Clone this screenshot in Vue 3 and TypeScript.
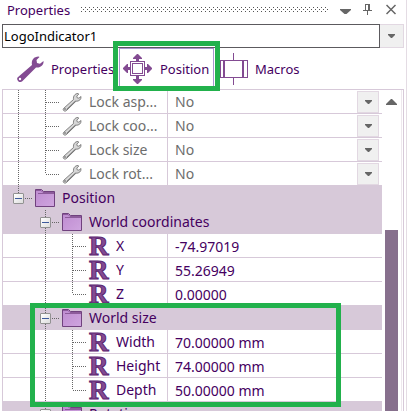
<script setup lang="ts">
import { ref } from 'vue'

type Guide = 'blank' | 'line' | 'tee' | 'elbow' | 'root' | 'node'
type Icon = 'wrench' | 'folder' | 'real'

interface Row {
  name: string
  guides: Guide[]
  icon: Icon
  kind: 'choice' | 'group' | 'text'
  value?: string
}

const choice = (name: string, last = false): Row => ({
  name, guides: ['line', last ? 'elbow' : 'tee'], icon: 'wrench', kind: 'choice', value: 'No',
})
const group = (name: string): Row => ({ name, guides: ['blank', 'node'], icon: 'folder', kind: 'group' })
const real = (name: string, value: string, last = false): Row => ({
  name, guides: ['blank', 'line', last ? 'elbow' : 'tee'], icon: 'real', kind: 'text', value,
})

const rows = ref<Row[]>([
  choice('Lock asp...'),
  choice('Lock coo...'),
  choice('Lock size'),
  choice('Lock rot...', true),
  { name: 'Position', guides: ['root'], icon: 'folder', kind: 'group' },
  group('World coordinates'),
  real('X', '-74.97019'),
  real('Y', '55.26949'),
  real('Z', '0.00000', true),
  group('World size'),
  real('Width', '70.00000 mm'),
  real('Height', '74.00000 mm'),
  real('Depth', '50.00000 mm', true),
  group('Rotation'),
])

const selected = ref('LogoIndicator1')

const isNode = (g: Guide) => g === 'root' || g === 'node'
const above = (g: Guide) => g !== 'blank'
const below = (g: Guide) => g === 'line' || g === 'tee' || g === 'node'
const branch = (g: Guide) => g === 'tee' || g === 'elbow' || isNode(g)
</script>

<template>
  <main class="panel">
    <header class="caption">
      <h1>Properties</h1>
      <svg class="grip" height="5" shape-rendering="crispEdges">
        <defs>
          <pattern id="grip-dots" width="4" height="4" patternUnits="userSpaceOnUse">
            <path d="M0 0h1v1H0zM2 2h1v1H2z" fill="#555" />
          </pattern>
        </defs>
        <rect width="100%" height="5" fill="url(#grip-dots)" />
      </svg>
      <button type="button" aria-label="Menu">
        <svg width="12" height="12" viewBox="0 0 12 12"><path d="M0 5h11v1l-4.500 4h-2L0 6z" fill="#666" /></svg>
      </button>
      <button type="button" aria-label="Pin">
        <svg width="12" height="12" viewBox="0 0 12 12" shape-rendering="crispEdges" fill="#666">
          <path d="M2 0h5v6h2v1H5v4H4V7H0V6h2zM3 1v5h2V1z" fill-rule="evenodd" />
        </svg>
      </button>
      <button type="button" aria-label="Close">
        <svg width="12" height="12" viewBox="0 0 12 12"><path d="M.5 1l9 9M9.500 1l-9 9" stroke="#666" stroke-width="1.500" /></svg>
      </button>
    </header>

    <div class="combo">
      <select v-model="selected" aria-label="Object">
        <option>LogoIndicator1</option>
      </select>
      <span class="drop"><svg width="7" height="4"><path d="M0 0h7v1L4 4H3L0 1z" fill="#666" /></svg></span>
    </div>

    <nav class="tabs">
      <button type="button" class="tab tab-first">
        <svg width="28" height="28" viewBox="0 0 28 28">
          <path d="M1.500 22.500L16 10C15 5 18 1.500 22.500 1.500l1 .5-3 3 .5 3 3 .8 3.500-2.800C28 9.500 25 13 20 12.500L6.500 26c-1 1-3 1.500-4 .5-1.200-1-1.800-3-1-4z" fill="#834b92" />
          <circle cx="4" cy="24" r="1.200" fill="#fff" />
        </svg>
        <span>Properties</span>
      </button>
      <button type="button" class="tab tab-active">
        <svg width="30" height="30" viewBox="0 0 30 30" fill="#834b92">
          <path d="M14 0h1l4 4v1h-3v3h-3V5h-3V4zM14 30h1l4-4v-1h-3v-3h-3v3h-3v1zM0 14v1l4 4h1v-3h3v-3H5v-3H4zM29 14v1l-4 4h-1v-3h-3v-3h3v-3h1z" />
          <path d="M7 7h15v15H7zM8 8v13h13V8zM9 9h11v11H9zM10 10v9h9v-9z" fill-rule="evenodd" shape-rendering="crispEdges" />
        </svg>
        <span>Position</span>
      </button>
      <button type="button" class="tab tab-last">
        <svg width="28" height="32" viewBox="0 0 28 32" fill="none" stroke="#834b92" shape-rendering="crispEdges">
          <path d="M.5 7.500h27v17H.5zM13.500 0v7M13.500 25v7" />
          <path d="M4 7v18M23 7v18" stroke-width="2" />
        </svg>
        <span>Macros</span>
      </button>
    </nav>

    <section class="grid">
      <table>
        <colgroup><col class="col-name" /><col /></colgroup>
        <tbody>
          <tr v-for="row in rows" :key="row.name" :class="row.kind">
            <th scope="row" :colspan="row.kind === 'group' ? 2 : 1">
              <div class="name">
                <span v-for="(g, i) in row.guides" :key="i" class="guide">
                  <svg width="27" height="24" shape-rendering="crispEdges">
                    <g stroke="#666" stroke-dasharray="1 1">
                      <path v-if="above(g)" d="M13.500 0v12" />
                      <path v-if="below(g)" d="M13.500 12v12" />
                      <path v-if="branch(g)" d="M14 12.500h14" />
                    </g>
                  </svg>
                  <button v-if="isNode(g)" type="button" class="expander" :aria-label="'Collapse ' + row.name"></button>
                </span>
                <span class="icon">
                  <svg v-if="row.icon === 'wrench'" width="20" height="20" viewBox="0 0 20 20">
                    <path d="M1.500 16.500L11.500 7.500C11 4 13 1.500 16 1.500l.8.600-2 2 .4 1.700 1.700.4L19 4.500C19.300 7.500 17 9.500 14 9.200L4.500 18.500c-1.500 1.500-4.200 0-3-2z" fill="#d6d6d6" stroke="#777" stroke-width=".9" />
                    <path d="M4.500 17.700l9-8.700" stroke="#555" stroke-width=".8" />
                    <circle cx="3" cy="17" r=".8" fill="#555" />
                  </svg>
                  <svg v-else-if="row.icon === 'folder'" width="20" height="20" viewBox="0 0 20 20">
                    <defs>
                      <linearGradient id="folder-face" x1="0" y1="0" x2="1" y2="1">
                        <stop offset="0" stop-color="#be8bd0" /><stop offset="1" stop-color="#cfa5df" />
                      </linearGradient>
                    </defs>
                    <path d="M.5 1.500h6l2 2h11v15H.5z" fill="url(#folder-face)" stroke="#70417e" />
                    <path d="M1 2.500h5l2 2h11M3 5.500h16" fill="none" stroke="#8d5b9b" />
                  </svg>
                  <span v-else class="letter">R</span>
                </span>
                <span class="label">{{ row.name }}</span>
              </div>
            </th>
            <td v-if="row.kind === 'choice'">
              <div class="choice-box">
                <select v-model="row.value" :aria-label="row.name">
                  <option>No</option>
                  <option>Yes</option>
                </select>
                <span class="drop"><svg width="7" height="4"><path d="M0 0h7v1L4 4H3L0 1z" fill="#666" /></svg></span>
              </div>
            </td>
            <td v-else-if="row.kind === 'text'">
              <input v-model="row.value" type="text" :aria-label="row.name" />
            </td>
          </tr>
        </tbody>
      </table>
      <div class="scroll">
        <button type="button" aria-label="Scroll up">
          <svg width="11" height="6"><path d="M5 0h1l5 5v1H0V5z" fill="#666" /></svg>
        </button>
        <div class="thumb"></div>
      </div>
      <div class="highlight"></div>
    </section>
  </main>
</template>

<style>
body {
  overflow: hidden;
}
</style>

<style scoped>
.panel {
  box-sizing: border-box;
  display: flex;
  flex-direction: column;
  height: 100vh;
  padding-left: 2px;
  padding-right: 2px;
  border-right: 1px solid #e4dce4;
  background: #fff;
  color: #45005f;
  font: 14px/20px "Noto Sans", sans-serif;
  overflow: hidden;
}
button, select, input {
  margin: 0;
  padding: 0;
  border: 0;
  border-radius: 0;
  background: none;
  color: inherit;
  font: inherit;
  outline: 0;
  appearance: none;
}
svg {
  display: block;
}
.caption {
  display: flex;
  align-items: center;
  height: 19px;
  flex: none;
  gap: 11px;
  padding: 0 6px 0 5px;
}
.caption h1 {
  margin: 0;
  font: inherit;
  font-size: 13px;
}
.grip {
  flex: 1;
  width: 0;
}
.combo {
  display: flex;
  flex: none;
  height: 24px;
  margin-top: 5px;
}
.combo select {
  flex: 1;
  border: 1px solid #5c5a5e;
  padding-left: 1px;
  color: #000;
  font-size: 13px;
}
.drop {
  box-sizing: border-box;
  display: flex;
  flex: none;
  align-items: center;
  justify-content: center;
  width: 22px;
  border: 1px solid #e2d8e2;
  background: #f0f0f0;
  pointer-events: none;
}
.combo .drop {
  width: 24px;
  border-left: 0;
}
.tabs {
  display: flex;
  flex: none;
  height: 41px;
  font-size: 13px;
}
.tab {
  display: flex;
  align-items: center;
  gap: 7px;
}
.tab-first {
  width: 117px;
  padding-left: 14px;
}
.tab-active {
  position: relative;
  width: 95px;
  border: 1px solid #a996cf;
  padding-left: 3px;
}
.tab-active::after {
  content: "";
  position: absolute;
  z-index: 2;
  inset: -8px -7px -3px -7px;
  border: 5px solid #22b14c;
}
.tab-last {
  padding-left: 6px;
}
.grid {
  position: relative;
  display: flex;
  flex: 1;
  min-height: 0;
  border: 1px solid #d7c9d9;
  border-bottom: 0;
}
table {
  flex: 1;
  align-self: flex-start;
  border-collapse: collapse;
  table-layout: fixed;
}
.col-name {
  width: 164px;
}
tr {
  height: 24px;
}
th, td {
  box-sizing: border-box;
  height: 24px;
  padding: 0;
  font-weight: 400;
  text-align: left;
  box-shadow: inset 0 -1px #d7c9d9;
}
td {
  box-shadow: inset 0 -1px #d7c9d9, inset 1px 0 #d7c9d9;
}
.group th {
  background: #d7c9d9;
}
.choice {
  color: #6d6d6d;
}
.name {
  display: flex;
  align-items: center;
  height: 24px;
  padding-left: 2px;
  white-space: nowrap;
}
.guide {
  display: grid;
  width: 27px;
  height: 24px;
}
.guide > * {
  grid-area: 1 / 1;
}
.guide svg {
  overflow: visible;
}
.expander {
  box-sizing: border-box;
  align-self: center;
  width: 11px;
  height: 11px;
  margin-left: 8px;
  border: 1px solid #929292;
  border-radius: 1px;
  background:
    linear-gradient(#3d5a9c, #3d5a9c) center / 7px 1px no-repeat,
    linear-gradient(135deg, #fff, #ddd);
}
.icon {
  display: flex;
  width: 20px;
  margin: 0 7px 0 3px;
}
.letter {
  width: 20px;
  color: #834b92;
  font: 700 27px/20px "Liberation Serif", serif;
  -webkit-text-stroke: 1px #5b2470;
}
.choice-box {
  display: flex;
  height: 22px;
  padding-right: 3px;
}
.choice-box select {
  flex: 1;
  padding-left: 8px;
}
td input {
  display: block;
  box-sizing: border-box;
  width: 100%;
  height: 22px;
  padding-left: 8px;
}
.scroll {
  display: flex;
  flex: none;
  flex-direction: column;
  width: 19px;
  margin-right: 1px;
  border-right: 1px solid #eee8ee;
}
.scroll button {
  display: flex;
  align-items: center;
  justify-content: center;
  height: 24px;
}
.thumb {
  flex: 1;
  margin: 116px 3px 0 3px;
  background: #87708d;
}
.highlight {
  position: absolute;
  box-sizing: border-box;
  left: 27px;
  top: 213px;
  width: 311px;
  height: 104px;
  border: 5px solid #22b14c;
  pointer-events: none;
}
</style>
